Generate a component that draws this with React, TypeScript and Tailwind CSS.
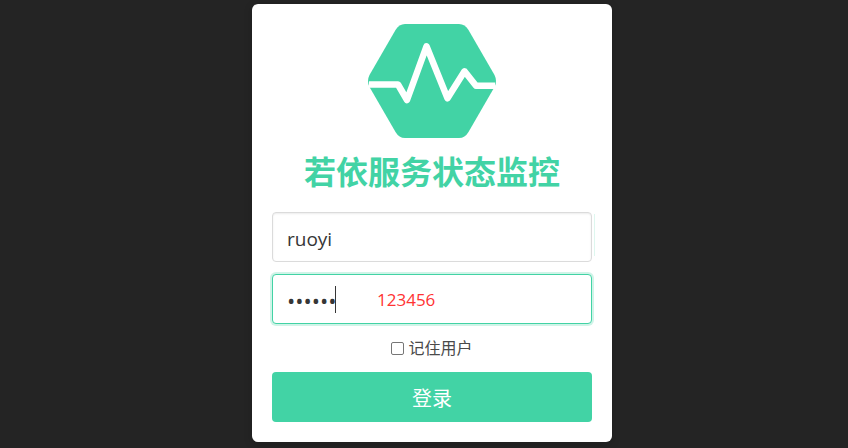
import React from "react";

function Logo() {
  return (
    <svg viewBox="0 0 128 114" className="block h-[114px] w-32" aria-hidden="true">
      <path
        fill="#42d3a5"
        d="M37 0H91Q97 0 100.500 6L126.500 51Q129.500 57 126.500 63L100.500 108Q97 114 91 114H37Q31 114 27.500 108L1.500 63Q-1.500 57 1.500 51L27.500 6Q31 0 37 0Z"
      />
      <path
        fill="none"
        stroke="#fff"
        strokeWidth="6.500"
        strokeLinejoin="round"
        d="M1 60.500H30L39 76L58.500 22.300L79.500 74.300L96.500 47.300L108 61.700H127"
      />
    </svg>
  );
}

const field =
  "block h-[50px] w-full rounded border bg-white px-3.5 text-[#363636] outline-none";

export default function App() {
  return (
    <main className="flex min-h-screen flex-col items-center bg-[#242424] pt-1 pr-4 pb-1.5 pl-8 font-['Open_Sans','Noto_Sans_CJK_SC',sans-serif] text-[#4a4a4a]">
      <form
        className="w-full max-w-[360px] rounded-md bg-white p-5 shadow-[0_2px_8px_rgba(10,10,10,0.2)]"
        onSubmit={(e) => e.preventDefault()}
      >
        <div className="flex flex-col items-center">
          <Logo />
          <h1 className="mt-3 mb-[18px] text-[32px] leading-[44px] font-bold text-[#42d3a5]">
            若依服务状态监控
          </h1>
        </div>
        <div className="relative">
          <input
            type="text"
            name="username"
            aria-label="Username"
            defaultValue="ruoyi"
            className={`${field} border-[#dbdbdb] pt-1 text-[19px] shadow-[inset_0_1px_2px_rgba(10,10,10,0.08)]`}
          />
          <span className="absolute top-0.5 -right-[3px] h-[42px] w-px bg-[#def7ef]" />
        </div>
        <div className="relative mt-3">
          <input
            type="password"
            name="password"
            aria-label="Password"
            defaultValue="123456"
            className={`${field} border-[#42d3a5] pt-0.5 text-[22px] shadow-[0_0_0_2px_rgba(66,211,165,0.25)]`}
          />
          <span className="absolute top-3 left-[63px] h-[27px] w-px bg-[#363636]" />
          <span className="pointer-events-none absolute top-0 left-[105px] text-[17px] leading-[52px] text-[#ff3333]">
            123456
          </span>
        </div>
        <div className="my-3 flex h-6 items-center justify-center gap-1">
          <input
            id="remember"
            type="checkbox"
            className="size-[13px] appearance-none rounded-[2px] border border-[#767676] bg-white"
          />
          <label htmlFor="remember" className="text-[16px] leading-6">
            记住用户
          </label>
        </div>
        <button
          type="submit"
          className="block h-[50px] w-full rounded bg-[#42d3a5] pt-1 text-[20px] text-white"
        >
          登录
        </button>
      </form>
    </main>
  );
}
